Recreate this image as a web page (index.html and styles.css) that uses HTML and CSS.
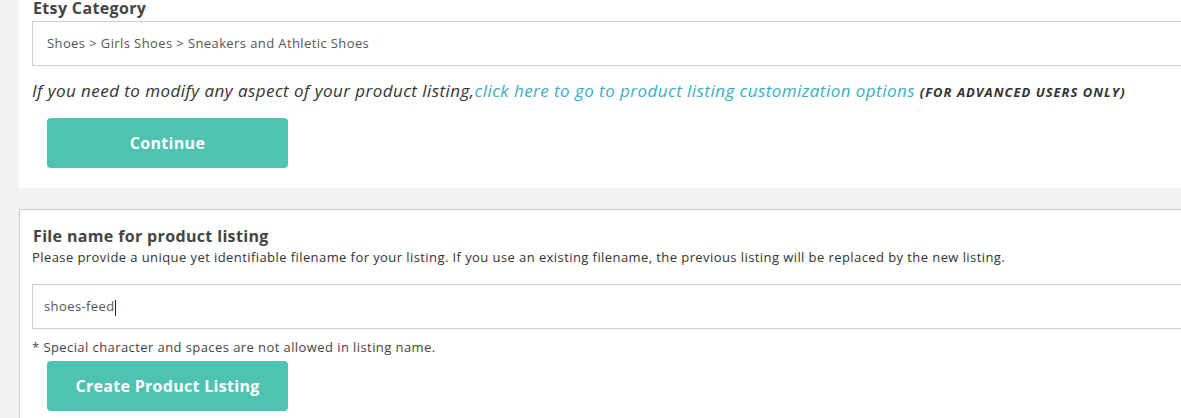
FILE: index.html
```html
<!DOCTYPE html>
<html lang="en">
<head>
    <meta charset="UTF-8">
    <meta name="viewport" content="width=device-width, initial-scale=1.0">
    <title>Create Listing</title>
    <link rel="stylesheet" href="styles.css">
</head>
<body>
    <div class="page">
        <div class="panel panel-top">
            <label class="field-title first-title">Etsy Category</label>
            <div class="text-box category-box">Shoes &gt; Girls Shoes &gt; Sneakers and Athletic Shoes</div>
            <p class="advanced-note">If you need to modify any aspect of your product listing,<a href="#">click here to go to product listing customization options</a> <b>(FOR ADVANCED USERS ONLY)</b></p>
            <button class="btn">Continue</button>
        </div>

        <div class="panel panel-bordered">
            <label class="field-title">File name for product listing</label>
            <p class="help">Please provide a unique yet identifiable filename for your listing. If you use an existing filename, the previous listing will be replaced by the new listing.</p>
            <div class="text-box name-box">shoes-feed<span class="caret"></span></div>
            <p class="small-note">* Special character and spaces are not allowed in listing name.</p>
            <button class="btn">Create Product Listing</button>
        </div>
    </div>
</body>
</html>
```

FILE: styles.css
```css
body {
    margin: 0;
    background-color: #f3f2f2;
    font-family: "Open Sans", Arial, sans-serif;
    color: #333;
}
.page {
    padding-left: 19px;
    overflow: hidden;
    height: 418px;
}
.panel {
    background-color: #fff;
    margin-right: -60px;
    padding-left: 13px;
}
.panel-top {
    padding-bottom: 20px;
}
.panel-bordered {
    margin-top: 21px;
    border-top: 1px solid #ccc;
    border-left: 1px solid #ccc;
    padding-left: 12px;
    padding-top: 15px;
    padding-bottom: 20px;
}
.field-title {
    display: block;
    font-size: 16px;
    font-weight: 700;
    color: #444;
    line-height: 22px;
    margin-left: 1px;
    letter-spacing: 0.35px;
}
.first-title {
    line-height: 16px;
}
.text-box {
    border: 1px solid #ccc;
    background: #fff;
    font-size: 13px;
    color: #555;
    letter-spacing: 0.4px;
}
.category-box {
    margin-top: 5px;
    height: 43px;
    line-height: 43px;
    padding-left: 14px;
}
.advanced-note {
    font-style: italic;
    font-size: 17px;
    color: #333;
    margin: 14px 0 15px;
    line-height: 22px;
    letter-spacing: 0.45px;
}
.advanced-note a {
    color: #3aaec4;
    text-decoration: none;
}
.advanced-note b {
    font-size: 13px;
    font-weight: 700;
    letter-spacing: 1px;
}
.btn {
    display: block;
    margin-left: 15px;
    width: 241px;
    height: 50px;
    border: none;
    border-radius: 4px;
    background-color: #4fc3b1;
    color: #fff;
    font-family: inherit;
    font-size: 16px;
    font-weight: 700;
    letter-spacing: 0.3px;
    cursor: pointer;
}
.help {
    margin: 1px 0 0;
    font-size: 13px;
    color: #333;
    line-height: 18px;
    letter-spacing: 0.42px;
}
.name-box {
    margin-top: 18px;
    height: 43px;
    line-height: 43px;
    padding-left: 11px;
}
.caret {
    display: inline-block;
    width: 1px;
    height: 16px;
    background: #222;
    vertical-align: middle;
}
.small-note {
    margin: 10px 0 6px;
    font-size: 13px;
    color: #444;
    line-height: 16px;
    letter-spacing: 0.42px;
}
```
